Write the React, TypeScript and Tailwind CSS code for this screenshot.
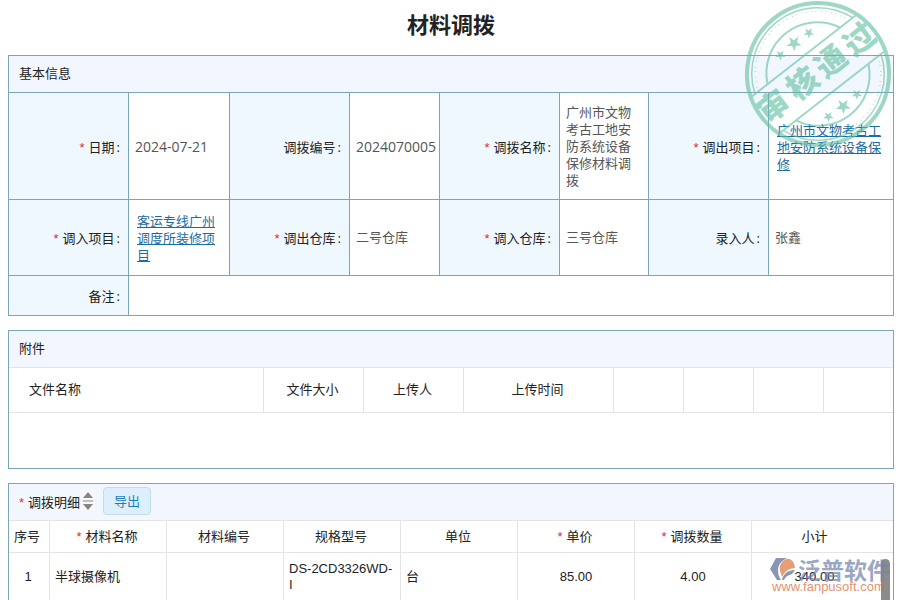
import React from "react";

const CJK = "font-['Open_Sans','Noto_Sans_CJK_SC',sans-serif]";
const LATIN = "font-['Liberation_Sans','Noto_Sans_CJK_SC',sans-serif]";

function Required() {
  return <span className="mr-1 font-['Liberation_Sans',sans-serif] text-[#e02b2b]">*</span>;
}

function Label({ children, required, first }: { children: React.ReactNode; required?: boolean; first?: boolean }) {
  return (
    <th
      scope="row"
      className={`border-t border-[#7ba6b8] bg-[#f0f8ff] pt-0.5 pr-2 text-right font-normal text-[#222] ${first ? "" : "border-l"}`}
    >
      {required && <Required />}
      {children}
      <span className="ml-0.5">:</span>
    </th>
  );
}

function Value({ children, span, big }: { children?: React.ReactNode; span?: number; big?: boolean }) {
  return (
    <td
      colSpan={span}
      className={`border-t border-l border-[#7ba6b8] px-1.5 text-[#555] ${big ? "text-[14px]" : ""}`}
    >
      {children}
    </td>
  );
}

function ProjectLink({ children }: { children: React.ReactNode }) {
  return (
    <a href="#project" className="block px-0.5 pt-0.5 text-[#1b6c9f] underline">
      {children}
    </a>
  );
}

function SectionHeader({ children }: { children: React.ReactNode }) {
  return (
    <header className="flex h-9 items-center bg-[#f1f6ff] px-2.5 pb-0.5 text-[#222]">{children}</header>
  );
}

const STAR = "0,-8 1.9,-2.5 7.6,-2.5 3,1 4.7,6.5 0,3.1 -4.7,6.5 -3,1 -7.6,-2.5 -1.9,-2.5";

const STAMP_GLYPHS = [
  { glyph: "审", x: -55 },
  { glyph: "核", x: -18 },
  { glyph: "通", x: 18 },
  { glyph: "过", x: 54 },
];

function Stamp() {
  return (
    <svg
      viewBox="-75 -75 150 150"
      role="img"
      aria-label="审核通过"
      className="pointer-events-none absolute -top-px right-[7px] h-[150px] w-[150px] opacity-60"
    >
      <g transform="rotate(-38)" fill="none" stroke="#5fbfa0">
        <circle r="71" strokeWidth="4" />
        <path d="M-62,-23 A66,66 0 0 1 62,-23" strokeWidth="1.5" />
        <path d="M-62,23 A66,66 0 0 0 62,23" strokeWidth="1.5" />
        <path d="M-58,-23 A62,62 0 0 1 58,-23" strokeWidth="1" strokeDasharray="1 3 1 5" />
        <path d="M-58,23 A62,62 0 0 0 58,23" strokeWidth="1" strokeDasharray="1 3 1 5" />
        <path d="M-46,-23 A51,51 0 0 1 46,-23" strokeWidth="2" />
        <path d="M-46,23 A51,51 0 0 0 46,23" strokeWidth="2" />
        <path d="M-68,-23 H68 M-68,23 H68" strokeWidth="2" />
        <g fill="#5fbfa0" stroke="none">
          <polygon points={STAR} transform="translate(0,-39)" />
          <polygon points={STAR} transform="translate(-18,-38) scale(.7)" />
          <polygon points={STAR} transform="translate(18,-38) scale(.7)" />
          <polygon points={STAR} transform="translate(0,41)" />
          <polygon points={STAR} transform="translate(-18,40) scale(.7)" />
          <polygon points={STAR} transform="translate(18,40) scale(.7)" />
          {STAMP_GLYPHS.map(({ glyph, x }) => (
            <text
              key={glyph}
              x={x}
              y="9"
              textAnchor="middle"
              className="font-['Noto_Sans_CJK_SC',sans-serif] text-[31px] font-black"
            >
              {glyph}
            </text>
          ))}
        </g>
      </g>
    </svg>
  );
}

function Watermark() {
  return (
    <div className="pointer-events-none absolute right-2.5 bottom-2 flex w-[120px] flex-col opacity-70">
      <div className="flex items-center justify-between">
        <svg viewBox="0 0 25 22" className="h-[22px] w-[25px]" aria-hidden="true">
          <path d="M6 0 H17 C11 3 8 7 8 12 C8 16 9 19 11 22 H7 L0 11 Z" fill="#566a95" />
          <path d="M10 13 C9 7 12 2 17 1 C21 0 25 5 25 10 C20 10 15 13 12 19 Z" fill="#d9773f" />
          <path d="M12 22 C13 16 18 12 25 12 L22 16 C18 17 15 19 14 22 Z" fill="#566a95" />
        </svg>
        <span className="font-['Noto_Sans_CJK_SC',sans-serif] text-[23px] leading-6 font-bold text-[#6f83ab]">
          泛普软件
        </span>
      </div>
      <span className="pl-0.5 font-['Liberation_Sans',sans-serif] text-[13px] leading-[11px] text-[#d9652f]">
        www.fanpusoft.com
      </span>
    </div>
  );
}

const FILE_COLUMNS = ["文件大小", "上传人", "上传时间", "", "", "", ""];

const DETAIL_COLUMNS = [
  { name: "材料名称", required: true },
  { name: "材料编号" },
  { name: "规格型号" },
  { name: "单位" },
  { name: "单价", required: true },
  { name: "调拨数量", required: true },
  { name: "小计" },
];

export default function App() {
  return (
    <main className={`relative h-screen overflow-hidden bg-white pr-1.5 pl-2 text-[13px] leading-[17px] ${CJK}`}>
      <h1 className="flex h-[55px] items-center justify-center pb-1.5 text-[22px] font-bold text-[#222]">材料调拨</h1>

      <section className="mb-3.5 border border-[#7ba6b8]">
        <SectionHeader>
          <h2>基本信息</h2>
        </SectionHeader>
        <table className="w-full table-fixed border-separate border-spacing-0">
          <colgroup>
            <col className="w-[119px]" />
            <col className="w-[101px]" />
            <col className="w-[120px]" />
            <col className="w-[90px]" />
            <col className="w-[120px]" />
            <col className="w-[89px]" />
            <col className="w-[120px]" />
            <col />
          </colgroup>
          <tbody>
            <tr className="h-[107px]">
              <Label first required>日期</Label>
              <Value big>2024-07-21</Value>
              <Label>调拨编号</Label>
              <Value big>2024070005</Value>
              <Label required>调拨名称</Label>
              <Value>广州市文物考古工地安防系统设备保修材料调拨</Value>
              <Label required>调出项目</Label>
              <Value>
                <ProjectLink>广州市文物考古工地安防系统设备保修</ProjectLink>
              </Value>
            </tr>
            <tr className="h-[76px]">
              <Label first required>调入项目</Label>
              <Value>
                <ProjectLink>客运专线广州调度所装修项目</ProjectLink>
              </Value>
              <Label required>调出仓库</Label>
              <Value>二号仓库</Value>
              <Label required>调入仓库</Label>
              <Value>三号仓库</Value>
              <Label>录入人</Label>
              <Value>张鑫</Value>
            </tr>
            <tr className="h-10">
              <Label first>备注</Label>
              <Value span={7} />
            </tr>
          </tbody>
        </table>
      </section>

      <section className="mb-3.5 border border-[#7ba6b8]">
        <SectionHeader>
          <h2>附件</h2>
        </SectionHeader>
        <table className="w-full table-fixed border-separate border-spacing-0">
          <colgroup>
            <col />
            <col className="w-[100px]" />
            <col className="w-[100px]" />
            <col className="w-[150px]" />
            <col className="w-[70px]" />
            <col className="w-[70px]" />
            <col className="w-[70px]" />
            <col className="w-[70px]" />
          </colgroup>
          <thead>
            <tr className="h-[46px]">
              <th className="border-y border-[#e4e4e4] pb-0.5 pl-5 text-left font-normal text-[#222]">文件名称</th>
              {FILE_COLUMNS.map((name, i) => (
                <th key={i} className="border-y border-l border-[#e4e4e4] pr-0.5 pb-0.5 font-normal text-[#222]">
                  {name}
                </th>
              ))}
            </tr>
          </thead>
        </table>
        <div className="h-[55px]" />
      </section>

      <section className="border border-[#7ba6b8]">
        <SectionHeader>
          <h2 className="flex items-center pt-0.5">
            <Required />
            调拨明细
          </h2>
          <button type="button" aria-label="排序" className="ml-px bg-[#f8f8f8] px-px">
            <svg viewBox="0 0 12 20" className="h-5 w-3" aria-hidden="true">
              <path d="M6 1 L11 7 H1 Z M6 19 L11 13 H1 Z" fill="#858585" />
              <path d="M1 10 H11" stroke="#858585" />
            </svg>
          </button>
          <button
            type="button"
            className="ml-2 h-7 w-12 rounded border border-[#c3dcea] bg-[#ddeffc] text-[#1b7fc4]"
          >
            导出
          </button>
        </SectionHeader>
        <table className={`w-full table-fixed border-separate border-spacing-0 text-[#222] ${LATIN}`}>
          <colgroup>
            <col className="w-10" />
            <col className="w-[117px]" />
            <col className="w-[117px]" />
            <col className="w-[117px]" />
            <col className="w-[117px]" />
            <col className="w-[117px]" />
            <col className="w-[117px]" />
            <col />
          </colgroup>
          <thead>
            <tr className="h-8">
              <th className="border-t border-[#e4e4e4] pr-1 font-normal">序号</th>
              {DETAIL_COLUMNS.map((column, i) => (
                <th
                  key={column.name}
                  className={`border-t border-l border-[#e4e4e4] font-normal ${i === 6 ? "pr-4" : "pr-0.5"}`}
                >
                  {column.required && <Required />}
                  {column.name}
                </th>
              ))}
            </tr>
          </thead>
          <tbody className="[&_td]:border-t [&_td]:border-l [&_td]:border-[#e4e4e4] [&_td]:px-[5px]">
            <tr className="h-12">
              <th scope="row" className="border-t border-[#e4e4e4] pr-0.5 font-normal">
                1
              </th>
              <td>半球摄像机</td>
              <td></td>
              <td className="leading-4">DS-2CD3326WD-I</td>
              <td>台</td>
              <td className="text-center">85.00</td>
              <td className="text-center">4.00</td>
              <td>
                <div className="pr-4 text-center">340.00</div>
              </td>
            </tr>
          </tbody>
        </table>
      </section>

      <div className="absolute right-2.5 bottom-0 h-[41px] w-[9px] rounded-t-full bg-[#8b8b8b]" />
      <Watermark />
      <Stamp />
    </main>
  );
}
